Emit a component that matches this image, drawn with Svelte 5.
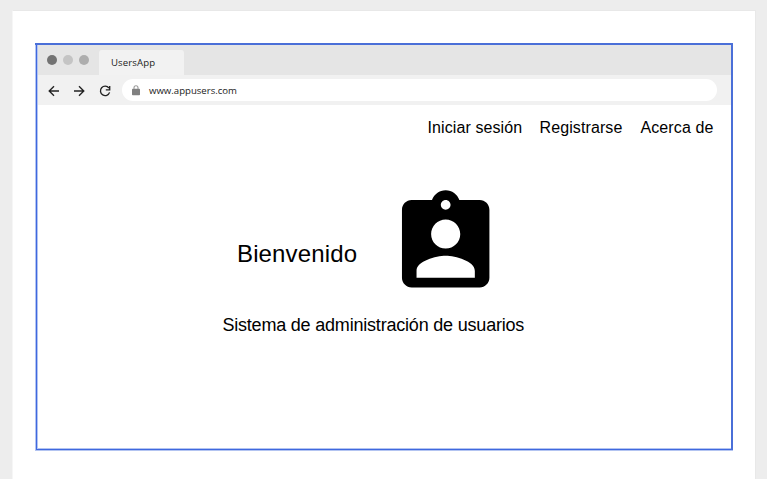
<script>
  const links = ['Iniciar sesión', 'Registrarse', 'Acerca de'];
  const lengths = [94, 83, 73];
</script>

<div class="canvas">
  <div class="sheet">
    <section class="browser">
      <header class="tabs">
        <div class="dots"><i></i><i></i><i></i></div>
        <div class="tab"><span>UsersApp</span></div>
      </header>
      <div class="toolbar">
        <svg class="nav-icon" viewBox="0 0 16 16"><path d="M13 8H3.5M8 3.2 3.2 8 8 12.8" /></svg>
        <svg class="nav-icon" viewBox="0 0 16 16"><path d="M3 8h9.5M8 3.2 12.8 8 8 12.8" /></svg>
        <svg class="nav-icon" viewBox="0 0 16 16"><path d="M11.9 5A4.7 4.7 0 1 0 12.6 9.4M12.7 3v3.8H8.8" /></svg>
        <div class="address">
          <svg class="lock" viewBox="0 0 8 11"><rect x="0" y="3.8" width="8" height="6.4" rx=".8" /><path d="M2 4V2.8a2 2 0 0 1 4 0V4" /></svg>
          <span>www.appusers.com</span>
        </div>
      </div>
      <main>
        <nav>
          {#each links as link, i}
            <a href="#top" style="width: {lengths[i]}px">{link}</a>
          {/each}
        </nav>
        <div class="hero">
          <h1>Bienvenido</h1>
          <svg class="badge" viewBox="-0.08 -0.08 24 24"><path d="M19 3h-4.18C14.4 1.84 13.3 1 12 1s-2.4.84-2.82 2H5c-1.1 0-2 .9-2 2v14c0 1.1.9 2 2 2h14c1.1 0 2-.9 2-2V5c0-1.1-.9-2-2-2zm-7 0c.55 0 1 .45 1 1s-.45 1-1 1-1-.45-1-1 .45-1 1-1zm0 4c1.66 0 3 1.34 3 3s-1.34 3-3 3-3-1.34-3-3 1.34-3 3-3zm6 12H6v-1.4c0-2 4-3.1 6-3.1s6 1.1 6 3.1V19z" /></svg>
        </div>
        <p>Sistema de administración de usuarios</p>
      </main>
    </section>
  </div>
</div>

<style>
  :global(body) { margin: 0; overflow: hidden; }
  .canvas {
    box-sizing: border-box;
    width: 767px;
    height: 479px;
    padding: 10px 11px 0 12px;
    background: #ededed;
    font-family: "Liberation Sans", Arial, sans-serif;
    color: #000;
  }
  .sheet {
    box-sizing: border-box;
    height: 469px;
    padding: 32px 22px 0 22px;
    border: 1px solid #e8e8e8;
    border-bottom: 0;
    border-left-color: #f6f6f6;
    background: #fff;
  }
  .browser {
    box-sizing: border-box;
    width: 698px;
    height: 408px;
    padding: 2px 2px 3px 3px;
    background:
      linear-gradient(#4a6fd8, #4a6fd8) 0 0 / 100% 2px no-repeat,
      linear-gradient(#4a6fd8, #4a6fd8) 100% 0 / 2px 407px no-repeat,
      linear-gradient(#3f68df, #3f68df) 1px 0 / 1px 407px no-repeat,
      linear-gradient(#3f68df, #3f68df) 1px 406px / 697px 1px no-repeat,
      #b3c4f1;
  }
  .tabs {
    display: flex;
    align-items: flex-end;
    height: 30px;
    background: #e5e5e5;
  }
  .dots {
    display: flex;
    gap: 6px;
    padding: 0 10px 10px 9px;
  }
  .dots i {
    width: 10px;
    height: 10px;
    border-radius: 50%;
    background: #737373;
  }
  .dots i:nth-child(2) { background: #c4c4c4; }
  .dots i:nth-child(3) { background: #adadad; }
  .tab {
    box-sizing: border-box;
    width: 85px;
    height: 25px;
    padding-left: 12px;
    border-radius: 3px 3px 0 0;
    background: #f2f2f2;
    font: 9.6px/25px "Open Sans", sans-serif;
    letter-spacing: .12px;
    color: #222;
  }
  .toolbar {
    display: flex;
    align-items: center;
    box-sizing: border-box;
    height: 30px;
    padding-left: 8px;
    background: #f1f1f1;
  }
  .nav-icon {
    flex: none;
    width: 16px;
    height: 16px;
    margin-top: 1px;
    margin-right: 9px;
    fill: none;
    stroke: #222;
    stroke-width: 1.35;
  }
  .nav-icon:nth-child(2) { margin-right: 10px; }
  .address {
    display: flex;
    align-items: center;
    box-sizing: border-box;
    width: 595px;
    height: 22px;
    padding-left: 10px;
    border-radius: 11px;
    background: #fff;
    font: 9.6px/22px "Open Sans", sans-serif;
    color: #222;
  }
  .address span { padding-top: 2px; }
  .lock {
    width: 8px;
    height: 11px;
    margin-right: 9px;
    fill: #808080;
  }
  .lock path { fill: none; stroke: #999; stroke-width: 1.1; }
  main {
    height: 343px;
    background: #fff;
  }
  nav {
    display: flex;
    justify-content: flex-end;
    gap: 18px;
    box-sizing: border-box;
    height: 80px;
    padding: 13px 17.5px 0 0;
  }
  nav a {
    font-size: 16px;
    line-height: 20px;
    letter-spacing: .1px;
    color: inherit;
    text-decoration: none;
    white-space: nowrap;
  }
  .hero {
    display: flex;
    padding-left: 199px;
  }
  h1 {
    width: 150px;
    margin: 54px 0 0;
    font-size: 24px;
    line-height: 30px;
    font-weight: 400;
    letter-spacing: .14px;
  }
  .badge {
    width: 116.6px;
    height: 116.6px;
    fill: #000;
  }
  p {
    margin: 13px 0 0 184.4px;
    font-size: 18px;
    line-height: 20px;
    letter-spacing: -.2px;
    white-space: nowrap;
  }
</style>
